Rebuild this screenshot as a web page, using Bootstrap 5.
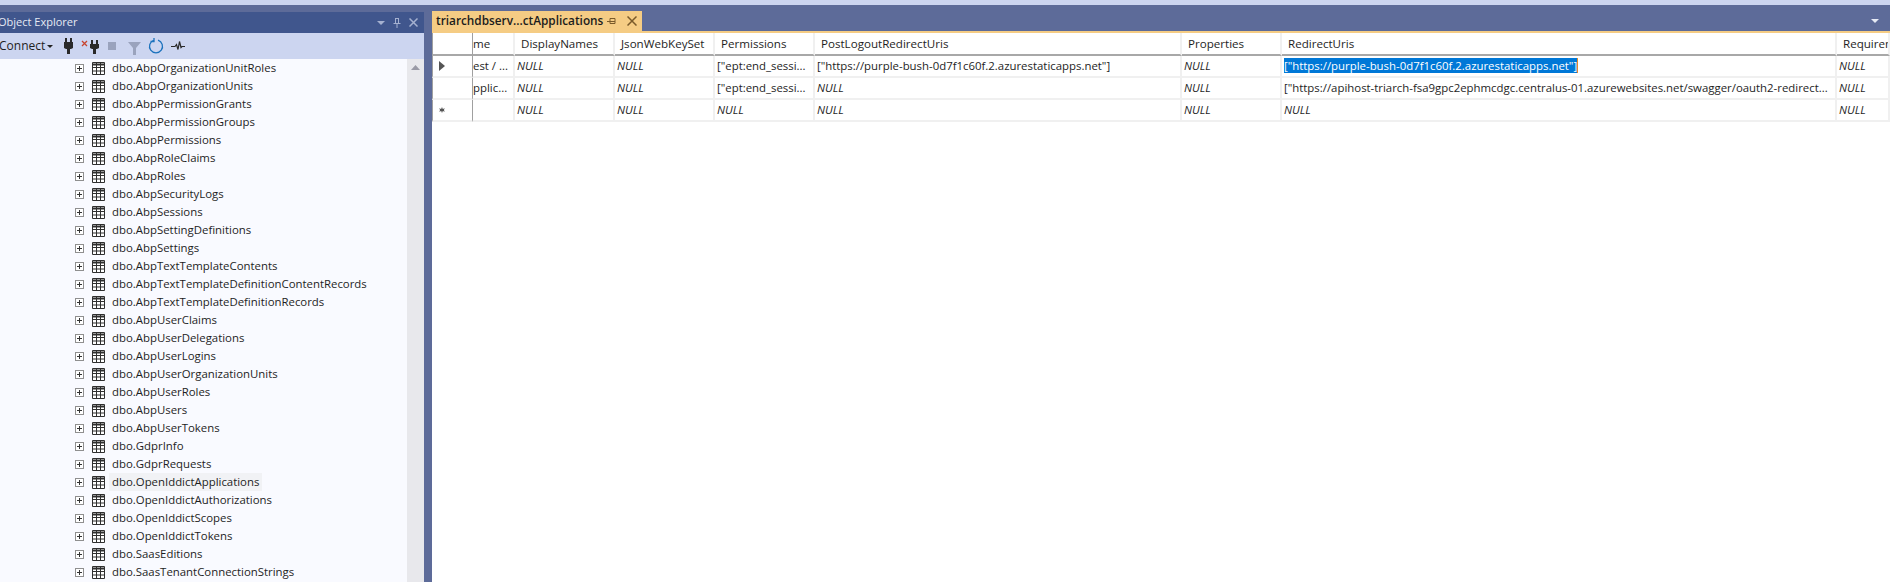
<!DOCTYPE html>
<html lang="en">
<head>
    <meta charset="UTF-8">
    <meta name="viewport" content="width=device-width, initial-scale=1.0">
    <title>Object Explorer</title>
    <link href="https://cdn.jsdelivr.net/npm/bootstrap@5.3.2/dist/css/bootstrap.min.css" rel="stylesheet">
    <style>
        html, body { height: 100%; }
        body { background: #5d6b99; font-family: "Open Sans", "Liberation Sans", sans-serif; font-size: 11.4px; color: #1e1e1e; overflow: hidden; }
        .top-strip { height: 5px; background: #ccd5f0; }
        .shell { height: 577px; }
        .oe-panel { width: 424px; margin-top: 7px; }
        .oe-title { height: 21px; background: #40568d; color: #e6eaf4; font-size: 11px; padding-right: 6px; }
        .oe-title-text { margin-left: -2px; }
        .oe-tools { height: 26px; background: #ccd5f0; }
        .oe-connect { width: 58px; margin-left: -1px; font-size: 12px; }
        .oe-connect span { width: 48px; }
        .oe-tool { width: 22px; }
        .oe-body { min-height: 0; background: #f9faff; }
        .oe-row { height: 18px; padding-left: 75px; white-space: nowrap; }
        .oe-row span { padding: 0 3px; line-height: 18px; margin-left: 4px; }
        .oe-row.hovered span { background: #f1f2f5; }
        .oe-exp { width: 9px; height: 9px; margin-top: 1px; }
        .oe-ico { width: 13px; height: 13px; margin-left: 8px; }
        .oe-scroll { width: 17px; background: #e8e8ec; padding-top: 6px; }
        .doc-pane { margin-left: 8px; min-width: 0; }
        .doc-tabs { height: 28px; padding-top: 6px; padding-right: 11px; border-bottom: 2px solid #f5cc84; }
        .doc-tab { width: 210px; height: 20px; background: #f5cc84; padding-left: 4px; padding-right: 5px; font-size: 11.8px; font-weight: 600; color: #1c1c1c; }
        .doc-tab-pin { margin-right: 11px; }
        .doc-grid { background: #fff; overflow: hidden; }
        .grid-tbl.table { width: 1458px; table-layout: fixed; margin: 0; font-size: 11.4px; border-collapse: separate; border-spacing: 0; }
        .grid-tbl.table > :not(caption) > * > * { padding: 0 0 0 2px; height: 22px; line-height: 20px; vertical-align: middle; border-width: 0 2px 2px 0; border-style: solid; border-color: #f0f0f0; white-space: nowrap; overflow: hidden; color: #1e1e1e; }
        .grid-tbl.table > thead > tr > th { height: 23px; font-size: 11.6px; font-weight: 400; padding-left: 6px; border-bottom: 2px solid #a8a8a8; }
        .grid-tbl.table > * > tr > th:first-child { padding: 0 0 0 6px; border-left: 1px solid #a0a0a0; border-right: 1px solid #a0a0a0; }
        .grid-tbl.table > thead > tr > th:nth-child(2),
        .grid-tbl.table > tbody > tr > td:nth-child(2) { padding-left: 0; }
        .w-head { width: 41px; } .w-name { width: 42px; } .w-std { width: 100px; }
        .w-post { width: 367px; } .w-redir { width: 555px; } .w-req { width: 53px; }
        .cell-sel { background: #0078d7; color: #fff; border-right: 1px solid #e08a2c; }
        svg { display: block; flex: none; }
    </style>
</head>
<body>
    <svg width="0" height="0" class="position-absolute">
        <symbol id="exp" viewBox="0 0 9 9"><rect x=".5" y=".5" width="8" height="8" fill="#fff" stroke="#8f8f8f"/><path d="M2 4.500h5M4.500 2v5" stroke="#333"/></symbol>
        <symbol id="tbl" viewBox="0 0 13 13"><path d="M.5.5h12v12H.5z" fill="#fff" stroke="#2f2f2f"/><path d="M0 2.500h13" stroke="#2f2f2f" stroke-width="2"/><path d="M.5 5.500h12M.5 9h12M4.500 1v11.500M8.500 1v11.500" stroke="#2f2f2f"/></symbol>
    </svg>
    <div class="top-strip"></div>
    <div class="shell d-flex">
        <div class="oe-panel d-flex flex-column flex-shrink-0">
            <div class="oe-title d-flex align-items-center gap-2">
                <span class="oe-title-text flex-grow-1">Object Explorer</span>
                <svg width="8" height="4" viewBox="0 0 8 4"><path d="M0 0h8L4 4z" fill="#a5b1d0"/></svg>
                <svg width="8" height="10" viewBox="0 0 8 10"><path d="M2 .5h4M2.500 .5v5M5.500 .5v5M.5 5.500h7M4 6v4" stroke="#a5b1d0" fill="none"/></svg>
                <svg width="9" height="9" viewBox="0 0 9 9"><path d="M.5.5l8 8M8.500.5l-8 8" stroke="#a5b1d0" stroke-width="1.500"/></svg>
            </div>
            <div class="oe-tools d-flex align-items-center">
                <div class="oe-connect d-flex align-items-center">
                    <span>Connect</span>
                    <svg width="6" height="3" viewBox="0 0 6 3"><path d="M0 0h6L3 3z" fill="#222"/></svg>
                </div>
                <div class="oe-tool d-flex justify-content-center"><svg width="9" height="16" viewBox="0 0 9 16"><path d="M1 0h2v4H1zM6 0h2v4H6zM0 4h9v6l-2 1H6v5H3v-5H2l-2-1z" fill="#2a2a2a"/></svg></div>
                <div class="oe-tool d-flex justify-content-center"><svg width="18" height="16" viewBox="0 0 18 16"><path d="M1 3l5 5M6 3L1 8" stroke="#c8452f" stroke-width="1.300"/><path d="M10 2h2v4h-2zM15 2h2v4h-2zM9 6h9v4l-2 1h-1v5h-3v-5h-1l-2-1z" fill="#2a2a2a"/></svg></div>
                <div class="oe-tool d-flex justify-content-center"><svg width="8" height="8" viewBox="0 0 8 8"><rect width="8" height="8" fill="#9aa3bd"/></svg></div>
                <div class="oe-tool d-flex justify-content-center"><svg width="13" height="13" viewBox="0 0 13 13" class="mt-1"><path d="M0 0h13L8 6v7H5V6z" fill="#9aa3bd"/></svg></div>
                <div class="oe-tool d-flex justify-content-center"><svg width="16" height="16" viewBox="0 0 16 16"><path d="M6 2.200a6.500 6.500 0 1 0 4 0M6 0v3.500H2.500" fill="none" stroke="#1b72bd" stroke-width="1.300"/></svg></div>
                <div class="oe-tool d-flex justify-content-center"><svg width="15" height="10" viewBox="0 0 15 10"><path d="M0 5.500h4l1.500-2 1.500 5 1.500-8 1.500 6 1-1h3" fill="none" stroke="#2a2a2a" stroke-width="1.200"/></svg></div>
            </div>
            <div class="oe-body d-flex flex-grow-1 overflow-hidden">
                <ul class="list-unstyled mb-0 flex-grow-1">
                    <li class="oe-row d-flex align-items-center"><svg class="oe-exp"><use href="#exp"/></svg><svg class="oe-ico"><use href="#tbl"/></svg><span>dbo.AbpOrganizationUnitRoles</span></li>
                    <li class="oe-row d-flex align-items-center"><svg class="oe-exp"><use href="#exp"/></svg><svg class="oe-ico"><use href="#tbl"/></svg><span>dbo.AbpOrganizationUnits</span></li>
                    <li class="oe-row d-flex align-items-center"><svg class="oe-exp"><use href="#exp"/></svg><svg class="oe-ico"><use href="#tbl"/></svg><span>dbo.AbpPermissionGrants</span></li>
                    <li class="oe-row d-flex align-items-center"><svg class="oe-exp"><use href="#exp"/></svg><svg class="oe-ico"><use href="#tbl"/></svg><span>dbo.AbpPermissionGroups</span></li>
                    <li class="oe-row d-flex align-items-center"><svg class="oe-exp"><use href="#exp"/></svg><svg class="oe-ico"><use href="#tbl"/></svg><span>dbo.AbpPermissions</span></li>
                    <li class="oe-row d-flex align-items-center"><svg class="oe-exp"><use href="#exp"/></svg><svg class="oe-ico"><use href="#tbl"/></svg><span>dbo.AbpRoleClaims</span></li>
                    <li class="oe-row d-flex align-items-center"><svg class="oe-exp"><use href="#exp"/></svg><svg class="oe-ico"><use href="#tbl"/></svg><span>dbo.AbpRoles</span></li>
                    <li class="oe-row d-flex align-items-center"><svg class="oe-exp"><use href="#exp"/></svg><svg class="oe-ico"><use href="#tbl"/></svg><span>dbo.AbpSecurityLogs</span></li>
                    <li class="oe-row d-flex align-items-center"><svg class="oe-exp"><use href="#exp"/></svg><svg class="oe-ico"><use href="#tbl"/></svg><span>dbo.AbpSessions</span></li>
                    <li class="oe-row d-flex align-items-center"><svg class="oe-exp"><use href="#exp"/></svg><svg class="oe-ico"><use href="#tbl"/></svg><span>dbo.AbpSettingDefinitions</span></li>
                    <li class="oe-row d-flex align-items-center"><svg class="oe-exp"><use href="#exp"/></svg><svg class="oe-ico"><use href="#tbl"/></svg><span>dbo.AbpSettings</span></li>
                    <li class="oe-row d-flex align-items-center"><svg class="oe-exp"><use href="#exp"/></svg><svg class="oe-ico"><use href="#tbl"/></svg><span>dbo.AbpTextTemplateContents</span></li>
                    <li class="oe-row d-flex align-items-center"><svg class="oe-exp"><use href="#exp"/></svg><svg class="oe-ico"><use href="#tbl"/></svg><span>dbo.AbpTextTemplateDefinitionContentRecords</span></li>
                    <li class="oe-row d-flex align-items-center"><svg class="oe-exp"><use href="#exp"/></svg><svg class="oe-ico"><use href="#tbl"/></svg><span>dbo.AbpTextTemplateDefinitionRecords</span></li>
                    <li class="oe-row d-flex align-items-center"><svg class="oe-exp"><use href="#exp"/></svg><svg class="oe-ico"><use href="#tbl"/></svg><span>dbo.AbpUserClaims</span></li>
                    <li class="oe-row d-flex align-items-center"><svg class="oe-exp"><use href="#exp"/></svg><svg class="oe-ico"><use href="#tbl"/></svg><span>dbo.AbpUserDelegations</span></li>
                    <li class="oe-row d-flex align-items-center"><svg class="oe-exp"><use href="#exp"/></svg><svg class="oe-ico"><use href="#tbl"/></svg><span>dbo.AbpUserLogins</span></li>
                    <li class="oe-row d-flex align-items-center"><svg class="oe-exp"><use href="#exp"/></svg><svg class="oe-ico"><use href="#tbl"/></svg><span>dbo.AbpUserOrganizationUnits</span></li>
                    <li class="oe-row d-flex align-items-center"><svg class="oe-exp"><use href="#exp"/></svg><svg class="oe-ico"><use href="#tbl"/></svg><span>dbo.AbpUserRoles</span></li>
                    <li class="oe-row d-flex align-items-center"><svg class="oe-exp"><use href="#exp"/></svg><svg class="oe-ico"><use href="#tbl"/></svg><span>dbo.AbpUsers</span></li>
                    <li class="oe-row d-flex align-items-center"><svg class="oe-exp"><use href="#exp"/></svg><svg class="oe-ico"><use href="#tbl"/></svg><span>dbo.AbpUserTokens</span></li>
                    <li class="oe-row d-flex align-items-center"><svg class="oe-exp"><use href="#exp"/></svg><svg class="oe-ico"><use href="#tbl"/></svg><span>dbo.GdprInfo</span></li>
                    <li class="oe-row d-flex align-items-center"><svg class="oe-exp"><use href="#exp"/></svg><svg class="oe-ico"><use href="#tbl"/></svg><span>dbo.GdprRequests</span></li>
                    <li class="oe-row hovered d-flex align-items-center"><svg class="oe-exp"><use href="#exp"/></svg><svg class="oe-ico"><use href="#tbl"/></svg><span>dbo.OpenIddictApplications</span></li>
                    <li class="oe-row d-flex align-items-center"><svg class="oe-exp"><use href="#exp"/></svg><svg class="oe-ico"><use href="#tbl"/></svg><span>dbo.OpenIddictAuthorizations</span></li>
                    <li class="oe-row d-flex align-items-center"><svg class="oe-exp"><use href="#exp"/></svg><svg class="oe-ico"><use href="#tbl"/></svg><span>dbo.OpenIddictScopes</span></li>
                    <li class="oe-row d-flex align-items-center"><svg class="oe-exp"><use href="#exp"/></svg><svg class="oe-ico"><use href="#tbl"/></svg><span>dbo.OpenIddictTokens</span></li>
                    <li class="oe-row d-flex align-items-center"><svg class="oe-exp"><use href="#exp"/></svg><svg class="oe-ico"><use href="#tbl"/></svg><span>dbo.SaasEditions</span></li>
                    <li class="oe-row d-flex align-items-center"><svg class="oe-exp"><use href="#exp"/></svg><svg class="oe-ico"><use href="#tbl"/></svg><span>dbo.SaasTenantConnectionStrings</span></li>
                </ul>
                <div class="oe-scroll d-flex justify-content-center flex-shrink-0">
                    <svg width="9" height="5" viewBox="0 0 9 5"><path d="M4.500 0L9 5H0z" fill="#9a9aa6"/></svg>
                </div>
            </div>
        </div>
        <div class="doc-pane d-flex flex-column flex-grow-1">
            <div class="doc-tabs d-flex justify-content-between flex-shrink-0">
                <div class="doc-tab d-flex align-items-center">
                    <span class="flex-grow-1">triarchdbserv...ctApplications</span>
                    <svg width="9" height="7" viewBox="0 0 9 7" class="doc-tab-pin"><path d="M0 3.500h3M3 .5h5v5H3zM3 3.500h5" stroke="#7a5a2a" fill="none"/></svg>
                    <svg width="10" height="10" viewBox="0 0 10 10"><path d="M.5.5l9 9M9.500.5l-9 9" stroke="#7a5a2a" stroke-width="1.500"/></svg>
                </div>
                <svg width="8" height="5" viewBox="0 0 8 5" class="mt-2"><path d="M0 0h8L4 4z" fill="#e6eaf4"/></svg>
            </div>
            <div class="doc-grid flex-grow-1">
                <table class="grid-tbl table">
                    <colgroup>
                        <col class="w-head"><col class="w-name"><col class="w-std"><col class="w-std"><col class="w-std"><col class="w-post"><col class="w-std"><col class="w-redir"><col class="w-req">
                    </colgroup>
                    <thead>
                        <tr><th></th><th>me</th><th>DisplayNames</th><th>JsonWebKeySet</th><th>Permissions</th><th>PostLogoutRedirectUris</th><th>Properties</th><th>RedirectUris</th><th>Requirem</th></tr>
                    </thead>
                    <tbody>
                        <tr>
                            <th><svg width="6" height="10" viewBox="0 0 6 10"><path d="M0 0l6 5-6 5z" fill="#555"/></svg></th>
                            <td>est / ...</td><td><em>NULL</em></td><td><em>NULL</em></td><td>["ept:end_sessi...</td>
                            <td>["https://purple-bush-0d7f1c60f.2.azurestaticapps.net"]</td><td><em>NULL</em></td>
                            <td><span class="cell-sel">["https://purple-bush-0d7f1c60f.2.azurestaticapps.net"]</span></td><td><em>NULL</em></td>
                        </tr>
                        <tr>
                            <th></th>
                            <td>pplic...</td><td><em>NULL</em></td><td><em>NULL</em></td><td>["ept:end_sessi...</td>
                            <td><em>NULL</em></td><td><em>NULL</em></td>
                            <td>["https://apihost-triarch-fsa9gpc2ephmcdgc.centralus-01.azurewebsites.net/swagger/oauth2-redirect...</td><td><em>NULL</em></td>
                        </tr>
                        <tr>
                            <th><svg width="6" height="6" viewBox="0 0 6 6"><path d="M3 0l.8 2 2-.8-.9 1.800.9 1.800-2-.8L3 6l-.8-2-2 .8.900-1.800L.1 1.200l2 .8z" fill="#555"/></svg></th>
                            <td></td><td><em>NULL</em></td><td><em>NULL</em></td><td><em>NULL</em></td>
                            <td><em>NULL</em></td><td><em>NULL</em></td><td><em>NULL</em></td><td><em>NULL</em></td>
                        </tr>
                    </tbody>
                </table>
            </div>
        </div>
    </div>
    <script src="https://cdn.jsdelivr.net/npm/bootstrap@5.3.2/dist/js/bootstrap.bundle.min.js"></script>
</body>
</html>
